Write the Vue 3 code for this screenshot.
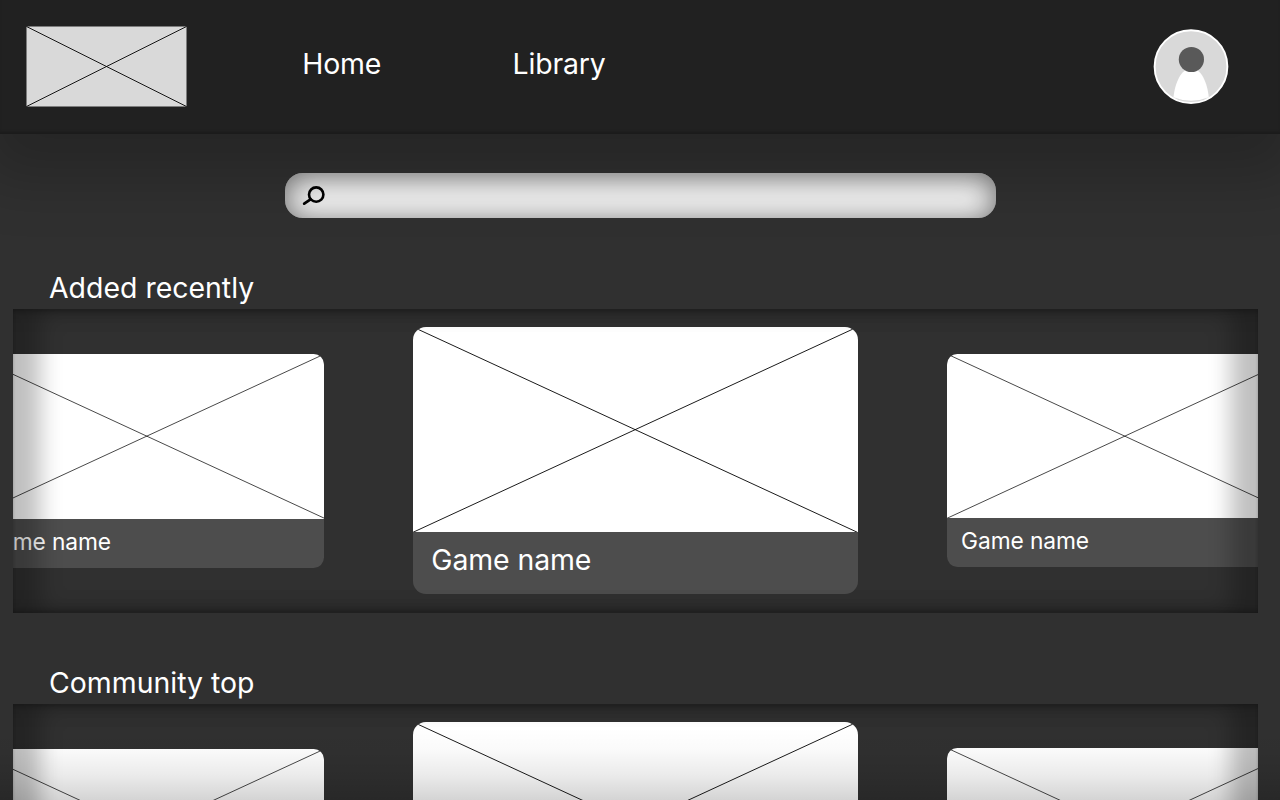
<script setup>
const sections = [
  { title: 'Added recently', games: ['Game name', 'Game name', 'Game name'] },
  { title: 'Community top', games: ['Game name', 'Game name', 'Game name'] },
]
const sizes = ['side previous', 'featured', 'side next']
</script>

<template>
  <div class="page">
    <header class="topbar">
      <svg class="logo" viewBox="0 0 161 81">
        <rect x=".5" y=".5" width="160" height="80" fill="#d9d9d9" />
        <path d="M.5.5 160.5 80.5M.5 80.5 160.5.5" stroke="#000" stroke-width=".9" />
      </svg>
      <nav>
        <a>Home</a>
        <a>Library</a>
      </nav>
      <svg class="avatar" viewBox="0 0 76 76">
        <circle cx="38" cy="37.6" r="36.4" fill="#d9d9d9" stroke="#fff" stroke-width="1.9" />
        <path d="M20.5 68.3C22 54 28 39.5 38.3 39.5S54.3 54 55.8 68.3Q38 75.3 20.5 68.3Z" fill="#fff" />
        <circle cx="38.4" cy="30.5" r="12.6" fill="#595959" />
      </svg>
    </header>

    <main>
      <div class="search">
        <svg class="glass" viewBox="0 0 24 22">
          <circle cx="14.2" cy="10.6" r="7.2" fill="none" stroke="#000" stroke-width="2.6" />
          <path d="M8.5 15.3 2.2 19.6" stroke="#000" stroke-width="2.8" stroke-linecap="round" />
        </svg>
      </div>

      <section v-for="section in sections" :key="section.title">
        <h2>{{ section.title }}</h2>
        <div class="carousel">
          <article v-for="(game, i) in section.games" :key="i" class="card" :class="sizes[i]">
            <svg class="cover" viewBox="0 0 444 205" preserveAspectRatio="none">
              <path d="M0 0 444 205M0 205 444 0" stroke="#000" stroke-width=".9" />
            </svg>
            <p>{{ game }}</p>
          </article>
        </div>
      </section>
    </main>
    <div class="fade"></div>
  </div>
</template>

<style>
body {
  margin: 0;
  background: #303030;
}
</style>

<style scoped>
.page {
  position: relative;
  width: 1280px;
  height: 800px;
  overflow: hidden;
  background: #303030;
  color: #fff;
  font-family: Inter, sans-serif;
  font-weight: 400;
  font-optical-sizing: none;
}
.topbar {
  box-sizing: border-box;
  display: flex;
  align-items: flex-start;
  height: 134px;
  padding: 26px 51px 0 26px;
  background: #212121;
  box-shadow: 0 25px 60px 18px rgba(0, 0, 0, .21), inset 0 -3px 3px -1px rgba(0, 0, 0, .2);
}
.logo {
  width: 161px;
  height: 81px;
}
nav {
  display: flex;
  gap: 131.3px;
  margin: 20px auto 0 115.2px;
  font-size: 28.44px;
  line-height: 35px;
  letter-spacing: -.15px;
}
.avatar {
  width: 76px;
  height: 76px;
  margin-top: 3px;
}
.search {
  box-sizing: border-box;
  width: 711px;
  height: 44.4px;
  margin: 39.4px auto 0;
  padding: 11.1px 0 0 17px;
  border-radius: 17.8px;
  background: #f0f0f0;
  box-shadow: inset 0 4px 29px rgba(0, 0, 0, .57);
}
.glass {
  display: block;
  width: 24px;
  height: 22px;
}
h2 {
  margin: 0 0 0 49px;
  font-size: 28.44px;
  font-weight: 400;
  line-height: 35px;
}
section {
  padding-top: 52.5px;
}
section + section {
  padding-top: 51.9px;
}
.carousel {
  position: relative;
  display: flex;
  justify-content: center;
  align-items: flex-start;
  gap: 89px;
  width: 1244.4px;
  height: 304px;
  margin: 3.7px 0 0 13.3px;
  overflow: hidden;
}
.carousel::after {
  content: '';
  position: absolute;
  inset: 0;
  box-shadow:
    inset 0 3px 3px rgba(0, 0, 0, .14),
    inset 0 -3px 3px rgba(0, 0, 0, .14),
    inset 27px 0 22px rgba(0, 0, 0, .25),
    inset -27px 0 22px rgba(0, 0, 0, .25);
}
.card {
  flex: none;
  overflow: hidden;
  background: #4d4d4d;
}
.cover {
  display: block;
  width: 100%;
  background: #fff;
}
.featured {
  width: 444.4px;
  height: 267px;
  margin-top: 18px;
  border-radius: 13px;
}
.featured .cover {
  height: 205.3px;
}
.side {
  width: 355.5px;
  height: 213.5px;
  margin-top: 44.8px;
  border-radius: 10.4px;
}
.previous {
  margin-top: 45.5px;
}
.side .cover {
  height: 164.3px;
}
.card p {
  margin: 0;
  padding: 10px 0 0 18px;
  font-size: 28.44px;
  line-height: 35px;
  letter-spacing: -.1px;
}
.side p {
  padding: 9px 0 0 14.4px;
  font-size: 22.75px;
  line-height: 28px;
}
.fade {
  position: absolute;
  right: 0;
  bottom: 0;
  left: 0;
  height: 72px;
  background: linear-gradient(rgba(0, 0, 0, 0), rgba(0, 0, 0, .02) 30%, rgba(0, 0, 0, .08) 65%, rgba(0, 0, 0, .17));
}
</style>
